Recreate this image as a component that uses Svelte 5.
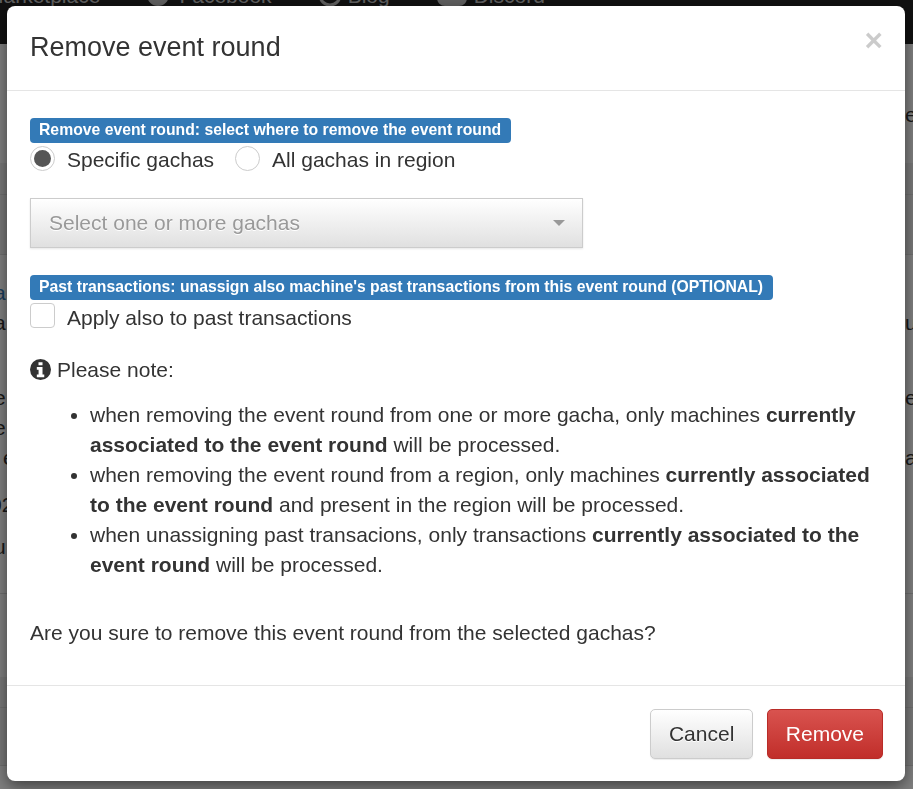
<script>
  let scope = $state("specific");
  let applyPast = $state(false);

  // what can still be seen of the page behind the dialog, top to bottom
  const pageRows = [
    { h: 56 },
    { h: 30, right: "es" },
    { h: 33 },
    { h: 32, kind: "band" },
    { h: 60, kind: "band" },
    { h: 23 },
    { h: 30, left: "a", kind: "link" },
    { h: 30, left: "a", right: "u" },
    { h: 45 },
    { h: 30, left: "e", right: "e" },
    { h: 30, left: "e" },
    { h: 30, left: "e", indent: 3, right: "a" },
    { h: 17 },
    { h: 30, left: "02", indent: -10 },
    { h: 12 },
    { h: 30, left: "u" },
    { h: 31 },
    { h: 84, kind: "line" },
    { h: 31, kind: "band" },
    { h: 58, kind: "band" },
  ];
</script>

<div class="page">
  <nav class="navbar">
    <span class="nav-link first">Marketplace</span>
    <span class="nav-link">
      <svg class="nav-icon" viewBox="0 0 22 22"><circle cx="11" cy="11" r="11" /></svg>
      Facebook
    </span>
    <span class="nav-link tight">
      <svg class="nav-icon" viewBox="0 0 22 22"><circle cx="11" cy="11" r="10" fill="none" stroke-width="3" /></svg>
      Blog
    </span>
    <span class="nav-link tight last">
      <svg class="nav-icon wide" viewBox="0 0 32 22"><rect x="1" y="0" width="30" height="22" rx="8" /></svg>
      Discord
    </span>
  </nav>
  {#each pageRows as row}
    <div class="page-row {row.kind ?? ''}" style="height: {row.h}px">
      <span class="left" style="margin-left: {row.indent ?? -6}px">{row.left ?? ""}</span>
      <span class="right">{row.right ?? ""}</span>
    </div>
  {/each}
</div>

<div class="backdrop"></div>

<div class="modal-wrap">
  <div class="modal">
    <header class="modal-header">
      <button class="close" type="button" aria-label="Close">×</button>
      <h4>Remove event round</h4>
    </header>

    <div class="modal-body">
      <div class="label-row">
        <span class="label">Remove event round: select where to remove the event round</span>
      </div>
      <div class="radios">
        <label class="choice">
          <input type="radio" name="scope" value="specific" bind:group={scope} />
          <span class="radio"></span>
          Specific gachas
        </label>
        <label class="choice">
          <input type="radio" name="scope" value="all" bind:group={scope} />
          <span class="radio"></span>
          All gachas in region
        </label>
      </div>

      <button class="select" type="button">
        <span>Select one or more gachas</span>
        <span class="caret"></span>
      </button>

      <div class="label-row second">
        <span class="label">Past transactions: unassign also machine's past transactions from this event round (OPTIONAL)</span>
      </div>
      <label class="choice past">
        <input type="checkbox" bind:checked={applyPast} />
        <span class="checkbox"></span>
        Apply also to past transactions
      </label>

      <p class="note">
        <svg class="info" viewBox="0 0 24 24" aria-hidden="true">
          <path fill-rule="evenodd" d="M12 0a12 12 0 1 0 0 24 12 12 0 0 0 0-24ZM9.7 3.6h4.6v3.6H9.7ZM7.8 9.2h6.5v8.6h2v3H7.8v-3h2v-5.6h-2Z" />
        </svg>
        Please note:
      </p>
      <ul>
        <li>when removing the event round from one or more gacha, only machines <b>currently associated to the event round</b> will be processed.</li>
        <li>when removing the event round from a region, only machines <b>currently associated to the event round</b> and present in the region will be processed.</li>
        <li>when unassigning past transacions, only transactions <b>currently associated to the event round</b> will be processed.</li>
      </ul>

      <p class="confirm">Are you sure to remove this event round from the selected gachas?</p>
    </div>

    <footer class="modal-footer">
      <button class="btn btn-default" type="button">Cancel</button>
      <button class="btn btn-danger" type="button">Remove</button>
    </footer>
  </div>
</div>

<style>
  :global(body) {
    margin: 0;
    font-family: "Liberation Sans", Arial, sans-serif;
    overflow: hidden;
  }

  .page {
    height: 789px;
    background: #fff;
    overflow: hidden;
    color: #333;
    font-size: 21px;
    line-height: 30px;
  }

  .navbar {
    height: 44px;
    background: #222;
    display: flex;
    align-items: flex-start;
    overflow: hidden;
    font-size: 21px;
    line-height: 24px;
  }

  .nav-link {
    display: flex;
    gap: 10px;
    color: #c0c0c0;
    margin-top: -16px;
    margin-left: 47px;
  }

  .nav-link.tight {
    gap: 7px;
  }

  .nav-link.last {
    gap: 6px;
    margin-left: 46px;
  }

  .first {
    margin-left: -14px;
  }

  .nav-icon {
    width: 22px;
    height: 22px;
    fill: #c0c0c0;
    stroke: #c0c0c0;
    stroke-width: 0;
  }

  .nav-icon.wide {
    width: 32px;
  }

  .page-row {
    display: flex;
    justify-content: space-between;
    box-sizing: border-box;
    overflow: hidden;
  }

  .page-row.band {
    background: #f0f0f0;
    border-bottom: 1px solid #ddd;
  }

  .page-row.line {
    border-top: 1px solid #ddd;
  }

  .page-row.link .left {
    color: #337ab7;
  }

  .left {
    white-space: pre;
  }

  .right {
    width: 8px;
    white-space: nowrap;
  }

  .backdrop {
    position: fixed;
    inset: 0;
    background: #000;
    opacity: 0.5;
  }

  .modal-wrap {
    position: fixed;
    inset: 0;
    padding: 6px 8px 8px 7px;
    box-sizing: border-box;
  }

  .modal {
    background: #fff;
    border-radius: 8px;
    box-shadow: 0 5px 15px rgba(0, 0, 0, 0.5);
    height: 775px;
    color: #333;
    font-size: 21px;
    line-height: 30px;
    display: flex;
    flex-direction: column;
  }

  .modal-header {
    height: 85px;
    box-sizing: border-box;
    padding: 23px 23px 0;
    border-bottom: 1px solid #e5e5e5;
  }

  h4 {
    margin: 0;
    font-size: 27px;
    font-weight: 400;
    line-height: 37px;
  }

  .close {
    float: right;
    border: 0;
    padding: 0;
    margin: -1px -1px 0 0;
    background: none;
    color: #000;
    opacity: 0.2;
    font-family: inherit;
    font-size: 31.5px;
    font-weight: 700;
    line-height: 24px;
  }

  .modal-body {
    flex: 1;
    padding: 27px 23px 0;
  }

  .label-row {
    height: 25px;
    display: flex;
  }

  .label {
    background: #337ab7;
    color: #fff;
    font-size: 15.75px;
    font-weight: 700;
    line-height: 16px;
    padding: 4px 10px 5px 9px;
    border-radius: 4px;
  }

  .radios {
    display: flex;
    gap: 21px;
    height: 30px;
    margin-top: 2px;
  }

  .choice {
    display: flex;
    align-items: center;
    gap: 12px;
    cursor: pointer;
  }

  input {
    display: none;
  }

  .radio,
  .checkbox {
    width: 23px;
    height: 23px;
    border: 1px solid #ccc;
    background: #fff;
    display: block;
    flex: none;
  }

  .radio {
    border-radius: 50%;
    position: relative;
    margin-top: -4px;
  }

  .checkbox {
    border-radius: 4px;
  }

  input:checked + .radio::after {
    content: "";
    position: absolute;
    inset: 3px;
    border-radius: 50%;
    background: #555;
  }

  .select {
    display: flex;
    width: 553px;
    height: 50px;
    margin-top: 23px;
    padding: 0 17px 0 18px;
    align-items: center;
    justify-content: space-between;
    box-sizing: border-box;
    border: 1px solid #ccc;
    background: linear-gradient(#fff, #e0e0e0);
    box-shadow: 0 1px 2px rgba(0, 0, 0, 0.1);
    color: #999;
    font-family: inherit;
    font-size: 21px;
    text-shadow: 0 1px 0 #fff;
  }

  .caret {
    width: 0;
    height: 0;
    border-left: 6px solid transparent;
    border-right: 6px solid transparent;
    border-top: 6px solid #999;
  }

  .second {
    margin-top: 27px;
  }

  .past {
    height: 30px;
    margin-top: 3px;
    align-items: flex-start;
  }

  .note {
    margin: 22px 0 0;
    display: flex;
    align-items: center;
    gap: 6px;
  }

  .info {
    width: 21px;
    height: 21px;
    fill: #333;
    margin-top: -2px;
  }

  ul {
    margin: 15px 0 0;
    padding-left: 60px;
  }

  .confirm {
    margin: 38px 0 0;
  }

  .modal-footer {
    height: 96px;
    box-sizing: border-box;
    border-top: 1px solid #e5e5e5;
    padding: 23px 22px 0 0;
    display: flex;
    justify-content: flex-end;
    gap: 14px;
  }

  .btn {
    height: 50px;
    padding: 0 18px;
    border-radius: 5px;
    font-family: inherit;
    font-size: 21px;
    box-sizing: border-box;
    border: 1px solid transparent;
  }

  .btn-default {
    padding: 0 17.5px;
    background: linear-gradient(#fff, #e0e0e0);
    border-color: #ccc;
    color: #333;
    text-shadow: 0 1px 0 #fff;
    box-shadow: 0 1px 1px rgba(0, 0, 0, 0.075);
  }

  .btn-danger {
    background: linear-gradient(#d9534f, #c12e2a);
    border-color: #b92c28;
    color: #fff;
    box-shadow: 0 1px 1px rgba(0, 0, 0, 0.075);
  }
</style>
